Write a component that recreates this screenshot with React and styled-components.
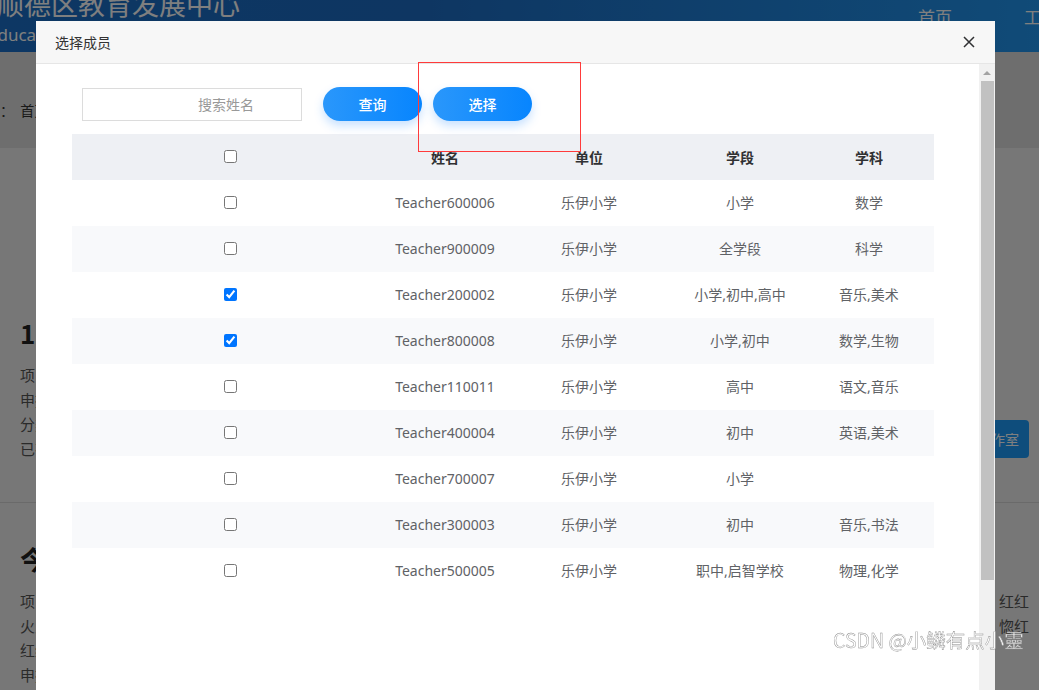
import React from "react";
import styled, { createGlobalStyle } from "styled-components";

const GlobalStyle = createGlobalStyle`
  html, body {
    margin: 0;
    padding: 0;
    overflow: hidden;
  }
  body {
    font-family: "Noto Sans", "Noto Sans CJK SC", sans-serif;
    background: #ededed;
  }
`;

const teachers = [
  { name: "Teacher600006", unit: "乐伊小学", stage: "小学", subject: "数学" },
  { name: "Teacher900009", unit: "乐伊小学", stage: "全学段", subject: "科学" },
  { name: "Teacher200002", unit: "乐伊小学", stage: "小学,初中,高中", subject: "音乐,美术", checked: true },
  { name: "Teacher800008", unit: "乐伊小学", stage: "小学,初中", subject: "数学,生物", checked: true },
  { name: "Teacher110011", unit: "乐伊小学", stage: "高中", subject: "语文,音乐" },
  { name: "Teacher400004", unit: "乐伊小学", stage: "初中", subject: "英语,美术" },
  { name: "Teacher700007", unit: "乐伊小学", stage: "小学", subject: "" },
  { name: "Teacher300003", unit: "乐伊小学", stage: "初中", subject: "音乐,书法" },
  { name: "Teacher500005", unit: "乐伊小学", stage: "职中,启智学校", subject: "物理,化学" },
];

const App = () => {
  return (
    <>
      <GlobalStyle />
      <Page>
        <Header>
          <Brand>
            <BrandTitle>顺德区教育发展中心</BrandTitle>
            <BrandSub>Education Development Center</BrandSub>
          </Brand>
          <Nav>
            <NavItem>首页</NavItem>
            <NavItem>工作室</NavItem>
          </Nav>
        </Header>
        <Crumbs>当前位置：&nbsp;&nbsp;首页 &gt; 工作室</Crumbs>
        <Section>
          <SectionTitle>1 号名师工作室</SectionTitle>
          <SectionBody>
            <Lines>
              <Line>项目名称：名师工作室建设</Line>
              <Line>申报单位：乐伊小学</Line>
              <Line>分类：小学</Line>
              <Line>已有成员：2 人</Line>
            </Lines>
            <BlueButton>进入工作室</BlueButton>
          </SectionBody>
        </Section>
        <Divider />
        <Section>
          <SectionTitle $second>今日工作室</SectionTitle>
          <SectionBody>
            <Lines>
              <Line>项目简介：红红火火恍恍惚惚红红</Line>
              <Line>火火恍恍惚惚红红火火恍恍惚惚红</Line>
              <Line>红红火火</Line>
              <Line>申报单位</Line>
            </Lines>
            <SideLines>
              <Line>红红</Line>
              <Line>惚红</Line>
            </SideLines>
          </SectionBody>
        </Section>
      </Page>

      <Mask />

      <Dialog>
        <DialogHeader>
          <DialogTitle>选择成员</DialogTitle>
          <CloseButton aria-label="close">
            <svg width="12" height="12" viewBox="0 0 12 12">
              <path d="M1 1 L11 11 M11 1 L1 11" stroke="#303133" strokeWidth="1.5" fill="none" />
            </svg>
          </CloseButton>
        </DialogHeader>
        <DialogBody>
          <Content>
            <SearchRow>
              <SearchInput placeholder="搜索姓名" />
              <PillButton>查询</PillButton>
              <PillButton>选择</PillButton>
            </SearchRow>
            <Table>
              <colgroup>
                <col style={{ width: 316 }} />
                <col style={{ width: 114 }} />
                <col style={{ width: 174 }} />
                <col style={{ width: 128 }} />
                <col style={{ width: 130 }} />
              </colgroup>
              <thead>
                <tr>
                  <Th><Check type="checkbox" readOnly /></Th>
                  <Th>姓名</Th>
                  <Th>单位</Th>
                  <Th>学段</Th>
                  <Th>学科</Th>
                </tr>
              </thead>
              <tbody>
                {teachers.map((t, idx) => (
                  <Row key={t.name} $striped={idx % 2 === 1}>
                    <Td><Check type="checkbox" checked={!!t.checked} readOnly /></Td>
                    <Td>{t.name}</Td>
                    <Td>{t.unit}</Td>
                    <Td>{t.stage}</Td>
                    <Td>{t.subject}</Td>
                  </Row>
                ))}
              </tbody>
            </Table>
          </Content>
          <ScrollTrack>
            <ScrollArrow />
            <ScrollThumb />
          </ScrollTrack>
        </DialogBody>
      </Dialog>

      <Annotation />
      <Watermark>CSDN @小鳞有点小靈</Watermark>
    </>
  );
};

export default App;

/* background page */

const Page = styled.div`
  width: 1039px;
  height: 690px;
  overflow: hidden;
  background: #eeeeee;
  font-family: "Noto Sans CJK SC", sans-serif;
`;

const Header = styled.div`
  height: 52px;
  background: linear-gradient(90deg, #1a6fc8 0%, #1c6cc4 40%, #2196f0 100%);
  display: flex;
  justify-content: space-between;
  overflow: hidden;
`;

const Brand = styled.div`
  display: flex;
  flex-direction: column;
  margin-left: -3px;
  margin-top: -14px;
`;

const BrandTitle = styled.div`
  font-size: 27px;
  line-height: 36px;
  color: #ffffff;
  white-space: nowrap;
`;

const BrandSub = styled.div`
  font-family: "Noto Sans", sans-serif;
  font-size: 17px;
  line-height: 20px;
  margin-top: 3px;
  margin-left: -9px;
  color: #ffffff;
  white-space: nowrap;
`;

const Nav = styled.div`
  display: flex;
  gap: 72px;
  margin-right: -36px;
  margin-top: 4px;
  flex: none;
`;

const NavItem = styled.div`
  font-family: "Liberation Serif", "Noto Sans CJK SC", serif;
  font-size: 17px;
  color: #ffffff;
  line-height: 30px;
  white-space: nowrap;
`;

const Crumbs = styled.div`
  height: 96px;
  background: #dcdcdc;
  display: flex;
  align-items: center;
  margin-left: -56px;
  font-size: 14px;
  color: #333;
  box-sizing: border-box;
  padding-top: 20px;
`;

const Section = styled.div`
  padding: 0 10px 0 20px;
`;

const SectionTitle = styled.div`
  font-size: 26px;
  font-weight: bold;
  color: #222;
  line-height: 36px;
  padding-top: ${(p) => (p.$second ? "38px" : "167px")};
  margin-bottom: 12px;
`;

const SectionBody = styled.div`
  display: flex;
  justify-content: space-between;
  align-items: flex-start;
`;

const Lines = styled.div`
  display: flex;
  flex-direction: column;
`;

const SideLines = styled(Lines)`
  align-items: flex-end;
`;

const Line = styled.div`
  font-size: 15px;
  line-height: 24.5px;
  color: #555;
  white-space: nowrap;
`;

const BlueButton = styled.div`
  margin-top: 57px;
  height: 38px;
  padding: 0 10px;
  display: flex;
  align-items: center;
  background: #1d9bf8;
  border-radius: 4px;
  color: #fff;
  font-size: 14px;
`;

const Divider = styled.div`
  height: 1px;
  background: #d4d4d4;
  margin-top: 41px;
`;

const Mask = styled.div`
  position: fixed;
  inset: 0;
  background: rgba(0, 0, 0, 0.5);
`;

/* dialog */

const Dialog = styled.div`
  position: fixed;
  left: 36px;
  top: 21px;
  width: 959px;
  height: 700px;
  background: #fff;
  display: flex;
  flex-direction: column;
  font-family: "Noto Sans", "Noto Sans CJK SC", sans-serif;
`;

const DialogHeader = styled.div`
  height: 42px;
  flex: none;
  background: #f7f7f7;
  border-bottom: 1px solid #e6e6e6;
  display: flex;
  align-items: center;
  justify-content: space-between;
  padding: 0 19px;
`;

const DialogTitle = styled.div`
  font-family: "Noto Sans CJK SC", sans-serif;
  font-size: 14px;
  color: #333;
  margin-top: -1px;
`;

const CloseButton = styled.div`
  width: 12px;
  height: 12px;
  display: flex;
  margin-right: 1px;
`;

const DialogBody = styled.div`
  flex: 1;
  display: flex;
  min-height: 0;
`;

const Content = styled.div`
  flex: 1;
  padding: 23px 45px 0 36px;
`;

const SearchRow = styled.div`
  display: flex;
  align-items: center;
  gap: 11px;
  padding-left: 10px;
  height: 34px;
`;

const SearchInput = styled.input`
  width: 220px;
  height: 33px;
  box-sizing: border-box;
  border: 1px solid #dcdcdc;
  outline: none;
  margin-right: 10px;
  padding: 0 0 0 115px;
  font-family: "Noto Sans CJK SC", sans-serif;
  font-size: 14px;
  color: #333;

  &::placeholder {
    color: #999;
  }
`;

const PillButton = styled.div`
  width: 99px;
  height: 34px;
  border-radius: 17px;
  background: linear-gradient(90deg, #2a97fb 0%, #0785fe 100%);
  box-shadow: 0 5px 10px rgba(40, 140, 255, 0.25);
  color: #fff;
  font-family: "Noto Sans CJK SC", sans-serif;
  font-size: 14px;
  font-weight: 500;
  display: flex;
  align-items: center;
  justify-content: center;
`;

const Table = styled.table`
  margin-top: 13px;
  width: 862px;
  border-collapse: collapse;
  table-layout: fixed;
`;

const Th = styled.th`
  height: 46px;
  padding: 0;
  background: #eef0f4;
  text-align: center;
  font-family: "Noto Sans CJK SC", sans-serif;
  font-size: 14px;
  line-height: 20px;
  font-weight: bold;
  color: #303133;
  vertical-align: middle;
`;

const Row = styled.tr`
  background: ${(p) => (p.$striped ? "#f8f9fb" : "#ffffff")};
`;

const Td = styled.td`
  height: 46px;
  padding: 0;
  text-align: center;
  font-size: 14px;
  line-height: 20px;
  color: #606266;
  vertical-align: middle;
`;

const Check = styled.input`
  display: block;
  width: 13px;
  height: 13px;
  margin: 0 auto;
  position: relative;
  top: -1px;
`;

const ScrollTrack = styled.div`
  width: 16px;
  flex: none;
  background: #f1f1f1;
  display: flex;
  flex-direction: column;
  align-items: center;
`;

const ScrollArrow = styled.div`
  margin-top: 7px;
  width: 0;
  height: 0;
  border-left: 4px solid transparent;
  border-right: 4px solid transparent;
  border-bottom: 4px solid #a3a3a3;
`;

const ScrollThumb = styled.div`
  margin-top: 6px;
  width: 13px;
  height: 499px;
  background: #c1c1c1;
`;

const Annotation = styled.div`
  position: fixed;
  left: 418px;
  top: 62px;
  width: 161px;
  height: 88px;
  border: 1px solid #ff3b3b;
`;

const Watermark = styled.div`
  position: fixed;
  left: 833px;
  top: 626px;
  font-family: "Noto Sans CJK SC", sans-serif;
  font-size: 19.5px;
  line-height: 28px;
  color: rgba(255, 255, 255, 0.92);
  -webkit-text-stroke: 0.4px #8a8a8a;
  white-space: nowrap;
`;
